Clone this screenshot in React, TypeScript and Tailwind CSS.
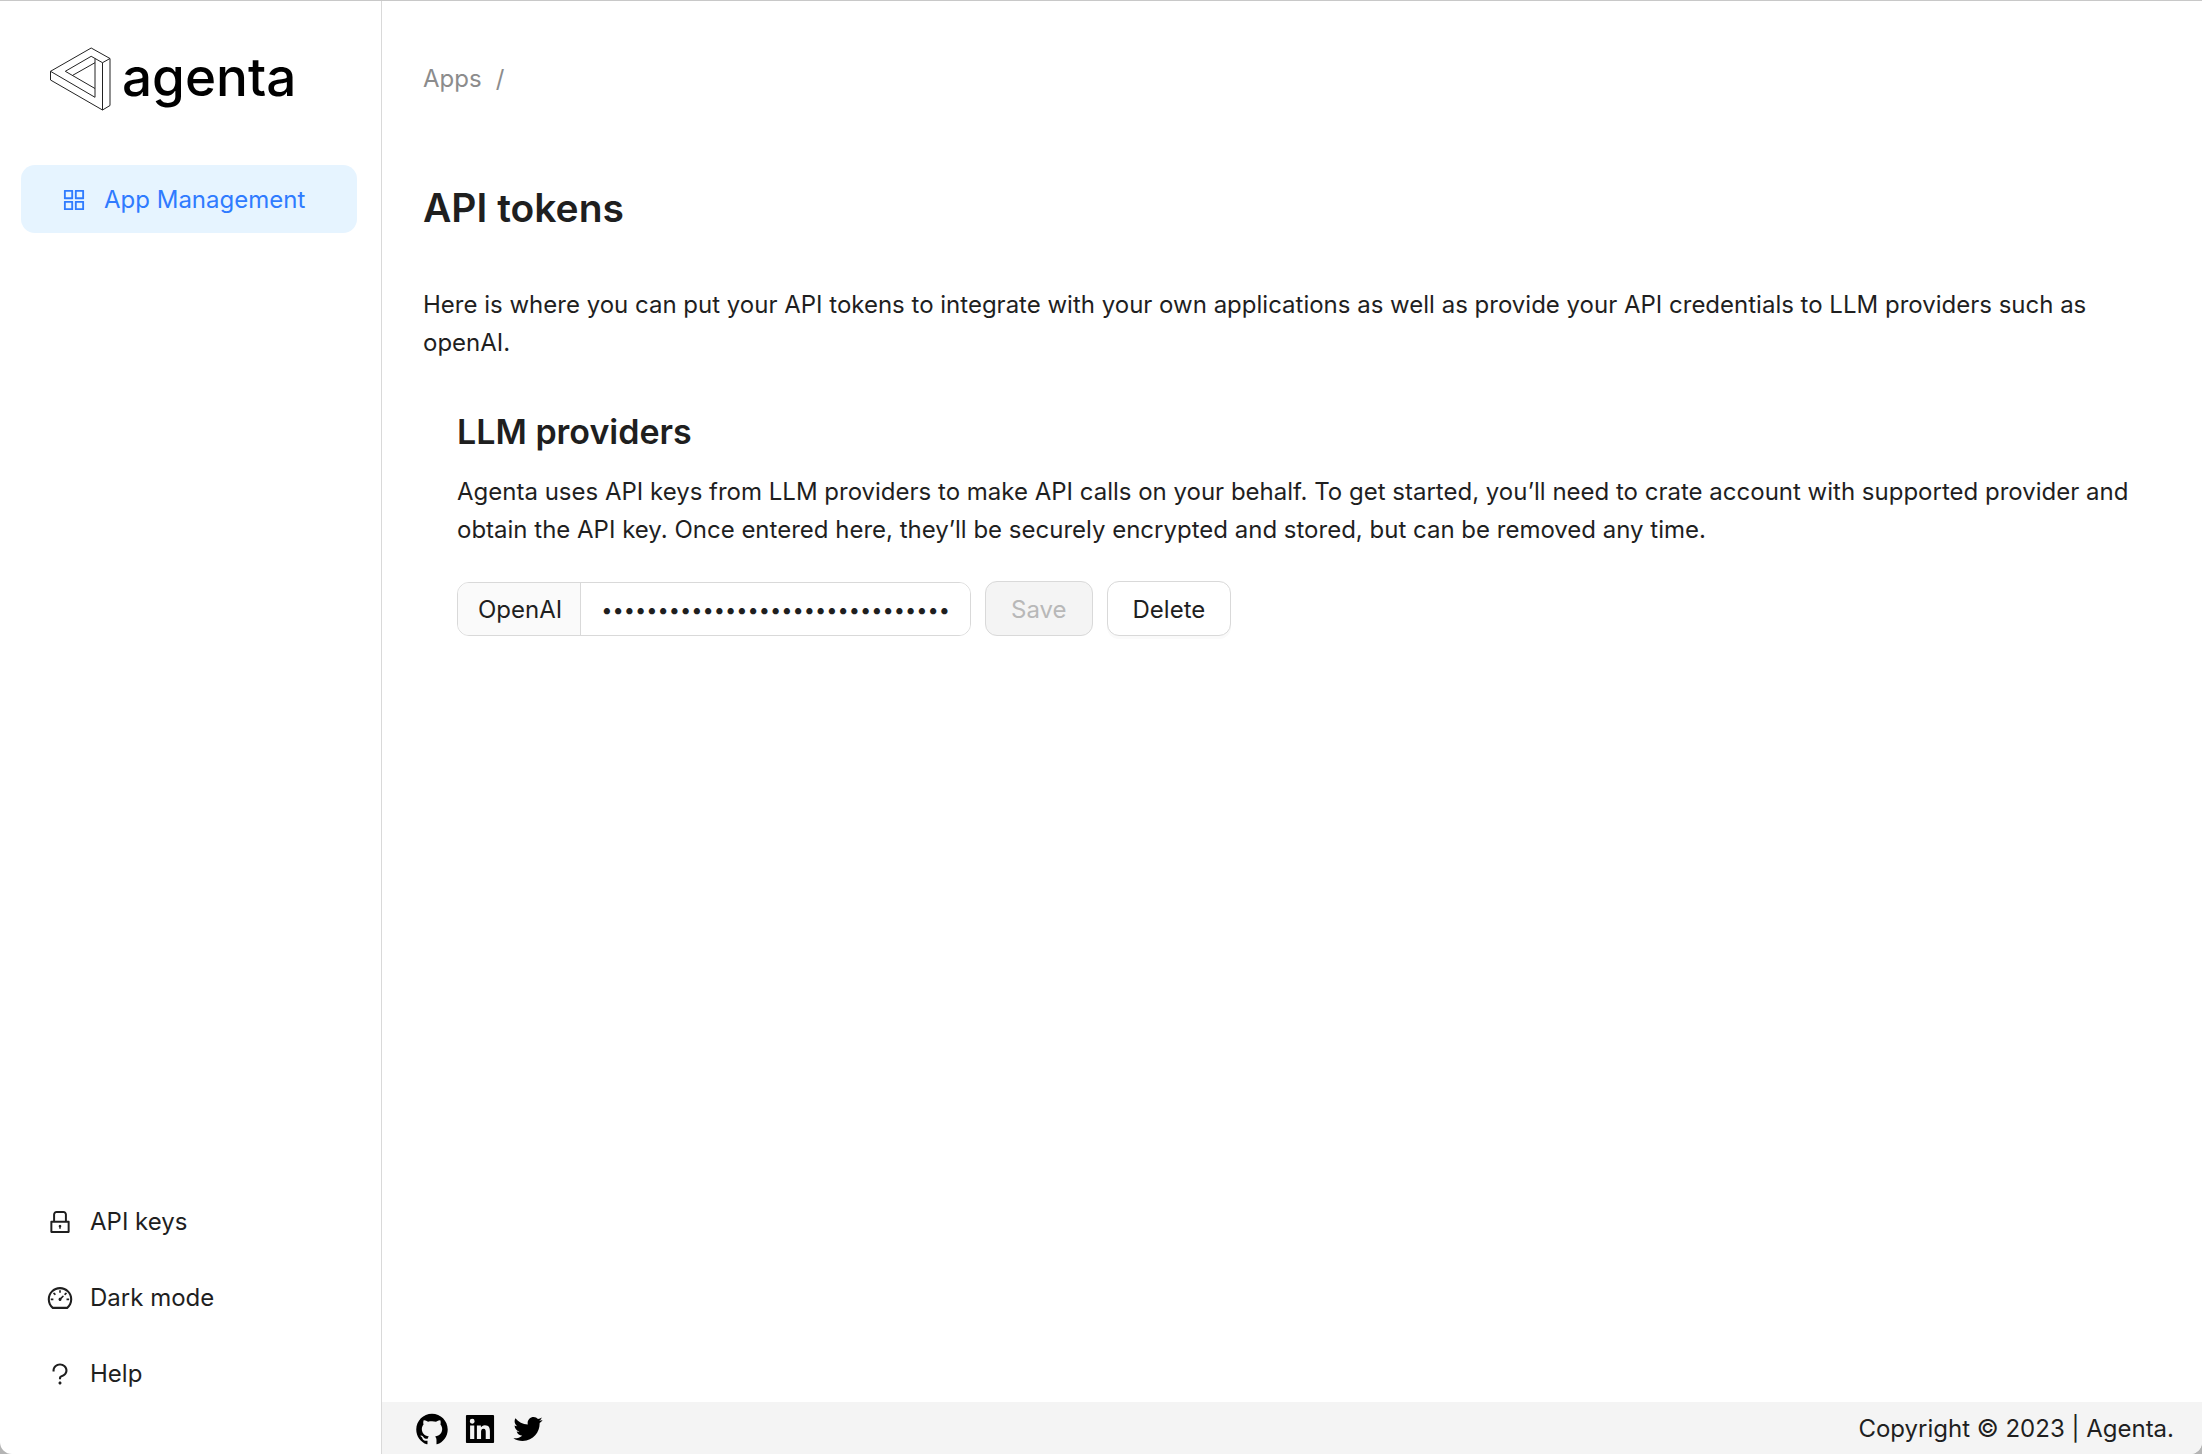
import { type ComponentType } from "react";
import {
  AiOutlineAppstore,
  AiOutlineLock,
  AiOutlineDashboard,
  AiOutlineQuestion,
  AiFillGithub,
  AiFillLinkedin,
  AiOutlineTwitter,
} from "react-icons/ai";

type IconType = ComponentType<{ className?: string }>;

const secondaryLinks: { label: string; icon: IconType }[] = [
  { label: "API keys", icon: AiOutlineLock },
  { label: "Dark mode", icon: AiOutlineDashboard },
  { label: "Help", icon: AiOutlineQuestion },
];

const socialLinks: { label: string; icon: IconType }[] = [
  { label: "GitHub", icon: AiFillGithub },
  { label: "LinkedIn", icon: AiFillLinkedin },
  { label: "Twitter", icon: AiOutlineTwitter },
];

function Logo() {
  return (
    <a href="#" aria-label="agenta" className="flex items-center gap-2.5 px-[29px]">
      <svg viewBox="0 0 62 64" className="h-16 w-[62px]" fill="none" stroke="#222" strokeWidth="1" strokeLinejoin="round">
        <path d="M.5 24.300 41.200 1 60 11.500V58.500L52.500 63 .5 33Z" />
        <path d="M.5 24.300 45 50.300V11.500" />
        <path d="M52.500 63V15.700L60 11.500M52.500 15.700 41.200 9.300 15.300 24.300 45 41.500M22.700 28.300 45 15.700" />
      </svg>
      <span className="pb-1 text-[53px] leading-[60px] font-medium text-black">agenta</span>
    </a>
  );
}

function Sidebar() {
  return (
    <aside className="flex w-[382px] shrink-0 flex-col border-r border-[#d9d9d9] pt-[46px] pr-6 pb-[42px] pl-[21px]">
      <Logo />
      <nav className="mt-[54px] flex flex-1 flex-col justify-between">
        <a
          href="#"
          className="flex h-[68px] items-center gap-4 rounded-[14px] bg-[#e6f4ff] px-[39px] pt-0.5 text-[#2f7bff]"
        >
          <AiOutlineAppstore className="size-7" />
          App Management
        </a>
        <div className="flex flex-col">
          {secondaryLinks.map(({ label, icon: Icon }) => (
            <a key={label} href="#" className="flex h-[76px] items-center gap-4 px-[25px]">
              <Icon className="size-7" />
              {label}
            </a>
          ))}
        </div>
      </nav>
    </aside>
  );
}

function ProviderKeyForm() {
  return (
    <form className="mt-8 flex items-end gap-3.5">
      <div className="flex h-[54px] w-[514px] overflow-hidden rounded-xl border border-[#d9d9d9]">
        <label
          htmlFor="openai-key"
          className="flex items-center border-r border-[#d9d9d9] bg-[#fafafa] pt-0.5 pr-[18px] pl-5"
        >
          OpenAI
        </label>
        <input
          id="openai-key"
          type="password"
          defaultValue="sk-0000000000000000000000000000"
          className="min-w-0 flex-1 bg-white px-5 pt-0.5 text-[20px] outline-none"
        />
      </div>
      <button
        type="button"
        disabled
        className="h-[55px] rounded-xl border border-[#d9d9d9] bg-[#f4f4f4] px-[25px] pt-0.5 text-[#b8b8b8]"
      >
        Save
      </button>
      <button
        type="button"
        className="h-[55px] rounded-xl border border-[#d9d9d9] bg-white px-[25px] pt-0.5 shadow-[0_3px_0_#fafafa]"
      >
        Delete
      </button>
    </form>
  );
}

export default function App() {
  return (
    <div className="min-h-screen bg-[#b4b4b4] font-['Inter',sans-serif] text-[24px] leading-[38px] text-[#1f1f1f]">
      <div className="flex min-h-screen overflow-hidden rounded-b-xl border-t border-[#c8c8c8] bg-white">
        <Sidebar />
        <div className="flex min-w-0 flex-1 flex-col">
          <main className="flex-1 px-[41px] pt-[59px]">
            <nav aria-label="Breadcrumb" className="flex gap-3.5 text-[#8c8c8c]">
              <a href="#">Apps</a>
              <span>/</span>
            </nav>
            <h1 className="mt-[86px] text-[39px] leading-[48px] font-semibold">API tokens</h1>
            <p className="mt-[54px]">
              Here is where you can put your API tokens to integrate with your own applications as well as provide your
              API credentials to LLM providers such as openAI.
            </p>
            <section className="mt-12 pl-[34px]">
              <h2 className="text-[34px] leading-[44px] font-semibold">LLM providers</h2>
              <p className="mt-[19px]">
                Agenta uses API keys from LLM providers to make API calls on your behalf. To get started, you’ll need to
                crate account with supported provider and obtain the API key. Once entered here, they’ll be securely
                encrypted and stored, but can be removed any time.
              </p>
              <ProviderKeyForm />
            </section>
          </main>
          <footer className="flex h-[52px] items-center justify-between bg-[#f4f4f4] pt-0.5 pr-7 pl-8">
            <div className="flex gap-3">
              {socialLinks.map(({ label, icon: Icon }) => (
                <a key={label} href="#" aria-label={label} className="text-black">
                  <Icon className="size-9" />
                </a>
              ))}
            </div>
            <p>Copyright © 2023 | Agenta.</p>
          </footer>
        </div>
      </div>
    </div>
  );
}
